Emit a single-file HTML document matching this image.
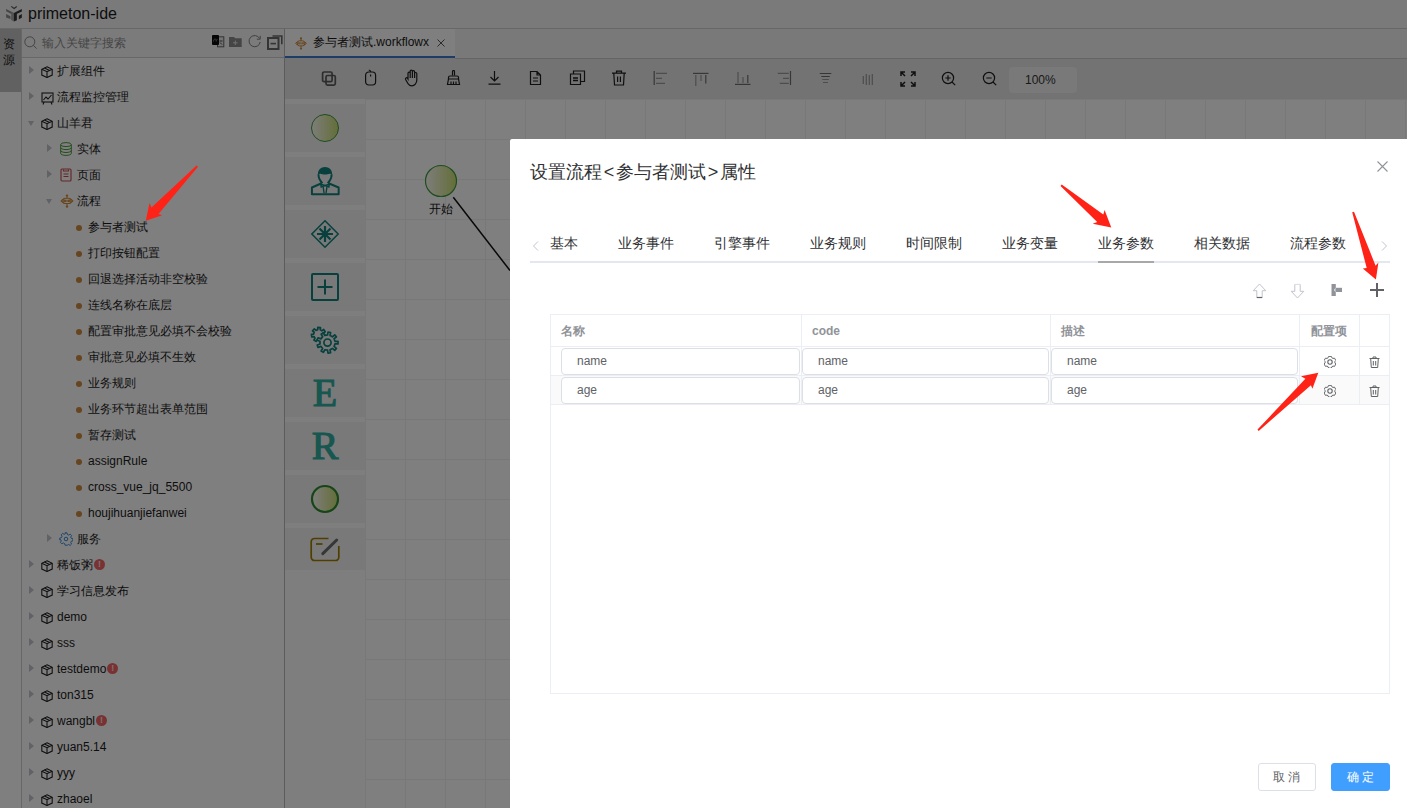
<!DOCTYPE html>
<html><head><meta charset="utf-8"><style>
*{box-sizing:border-box}
html,body{margin:0;padding:0}
body{width:1407px;height:808px;overflow:hidden;position:relative;background:#fff;font-family:"Liberation Sans",sans-serif;font-size:12px;color:#222}
.abs{position:absolute}
#hdr{position:absolute;left:0;top:0;width:1407px;height:29px;background:#f4f4f4;border-bottom:1px solid #cfcfcf}
#hdr .t{position:absolute;left:28px;top:4px;font-size:16px;color:#1a1a1a;line-height:19px}
#rail{position:absolute;left:0;top:29px;width:22px;height:779px;background:#fff;border-right:1px solid #cfcfcf}
#rail .tab{position:absolute;left:0;top:0;width:21px;height:63px;background:#c2c2c2;font-size:12px;line-height:16px;padding:6.5px 0 0 3px;color:#222}
#side{position:absolute;left:22px;top:29px;width:263px;height:779px;background:#fff;border-right:1px solid #b8b8b8}
#search{position:absolute;left:0;top:0;width:262px;height:29px;background:#f6f6f6;border-bottom:1px solid #cfcfcf}
#search .ph{position:absolute;left:20px;top:7px;color:#8c8c8c;font-size:12px;line-height:14px}
.row{position:absolute;left:0;width:263px;height:26px}
.row>*{position:absolute}
.tri{width:0;height:0;border-left:5px solid #c0c4cc;border-top:4px solid transparent;border-bottom:4px solid transparent;}
.trio{width:0;height:0;border-top:5px solid #c0c4cc;border-left:3.7px solid transparent;border-right:3.7px solid transparent;}
.dot{width:6px;height:6px;border-radius:50%;background:#cf8a3c;top:11px}
.ic{top:7.5px;line-height:0}
.tt{top:6px;line-height:14px;color:#1a1a1a;white-space:nowrap}
.badge{display:inline-block;width:11px;height:11px;border-radius:50%;background:#f26464;color:#fde;font-size:9px;line-height:11px;text-align:center;font-style:normal;font-weight:bold;vertical-align:2px;margin-left:1px}
#rowsbox{position:absolute;left:0;top:0}
#tabs{position:absolute;left:285px;top:29px;width:1122px;height:29px;background:#f3f3f3}
#tab1{position:absolute;left:0;top:0;width:170px;height:29px;background:#fff;border-bottom:2px solid #3a7bd0}
#tb{position:absolute;left:285px;top:58px;width:1122px;height:41px;background:#e6e6e6}
.tbi{position:absolute;top:14px}
#zoom{position:absolute;left:724px;top:9px;width:68px;height:26px;background:#f2f2f2;border-radius:4px;padding-left:16px;line-height:26px;color:#333;font-size:12px}
#canvas{position:absolute;left:285px;top:99px;width:1122px;height:709px;background-color:#fff;
 background-image:linear-gradient(#f0f0f0 1px,transparent 1px),linear-gradient(90deg,#f0f0f0 1px,transparent 1px);background-size:40px 40px;background-position:0 0,0 0}
#pal{position:absolute;left:285px;top:99px;width:80px;height:709px;background:#fcfcfc}
.pitem{position:absolute;left:285px;width:80px;height:48px;background:#f3f3f3}
#mask{position:absolute;left:0;top:0;width:1407px;height:808px;background:rgba(0,0,0,.5)}
#modal{position:absolute;left:510px;top:139px;width:920px;height:700px;background:#fff;border-radius:2px}

.mt{position:absolute;top:94px;font-size:14px;line-height:20px;color:#303133;white-space:nowrap}
.tbl{position:absolute;left:40px;top:175px;width:840px;height:380px;border:1px solid #ebeef5}
.tbl .th{position:absolute;top:9px;font-size:12px;font-weight:bold;color:#909399;line-height:14px;white-space:nowrap}
.vl{position:absolute;top:0;width:1px;background:#ebeef5}
.hl{position:absolute;left:0;width:838px;height:1px;background:#ebeef5}
.trw{position:absolute;left:41px;width:838px;height:28px}
.inp{position:absolute;height:27px;border:1px solid #dcdfe6;border-radius:4px;background:#fff}
.inp span{position:absolute;top:5px;line-height:14px;font-size:12px;color:#606266}
.br{display:inline-block;width:14px;text-align:center}
.btn{position:absolute;height:28px;border-radius:3px;font-size:12px;line-height:26px;text-align:center;white-space:nowrap}
</style></head><body>
<div id="hdr"><svg class="abs" style="left:4px;top:4px" width="20" height="20" viewBox="0 0 808 808"><path d="M290 95 410 180 515 100" fill="none" stroke="#555" stroke-width="45"/><path d="M85 200 400 365 400 455 85 290Z M85 400 260 490 260 610 85 545Z" fill="#8c8c8c"/><path d="M290 330 400 380 400 710 290 650Z" fill="#a8a8a8"/><path d="M400 365 720 200 720 300 400 455Z M400 380 520 330 520 660 400 710Z M600 470 720 405 720 560 600 615Z" fill="#383838"/></svg><span class="t">primeton-ide</span></div>
<div id="rail"><div class="tab">资<br>源</div></div>
<div id="side">
 <div id="search"><svg class="abs" style="left:2px;top:7px" width="13" height="13" viewBox="0 0 13 13"><circle cx="5.8" cy="5.8" r="5" fill="none" stroke="#8a8a8a" stroke-width="1"/><path d="M9.3 9.3l3.3 3.3" stroke="#8a8a8a" stroke-width="1"/></svg><span class="ph">输入关键字搜索</span>
 <svg class="abs" style="left:190px;top:6px" width="13" height="13" viewBox="0 0 13 13"><rect x="5.5" y="1.8" width="6.3" height="10" fill="#e8e8e8" stroke="#666" stroke-width="1"/><path d="M7.5 6h3M8 7.5l2 2" stroke="#444" stroke-width="1"/><rect x="0" y="0" width="7" height="10" rx="1" fill="#0a0a0a"/><path d="M1.5 6.5c0-2 1-2.5 1.7-2.5s1 .8 1 1.5v1M4.2 5.5c.3-.8.8-1.2 1.3-1.2" fill="none" stroke="#888" stroke-width=".8"/></svg>
 <svg class="abs" style="left:207px;top:8px" width="13" height="11" viewBox="0 0 13 11"><path d="M0 0h5l1.2 1.3H12.7V10H0z" fill="#8a8a8a"/><path d="M6.3 3.5v4.5M4 5.8h4.6" stroke="#e0e0e0" stroke-width="1"/></svg>
 <svg class="abs" style="left:226px;top:6px" width="14" height="13" viewBox="0 0 14 13"><path d="M11.6 3.5A5.6 5.6 0 1 0 12.2 7" fill="none" stroke="#808080" stroke-width="1"/><path d="M12.2 .8v3.4H8.8" fill="none" stroke="#808080" stroke-width="1"/></svg>
 <svg class="abs" style="left:245px;top:6px" width="16" height="15" viewBox="0 0 16 15"><path d="M5.5 1h9.3v8.3" fill="none" stroke="#6a6a6a" stroke-width="1.6"/><rect x="1" y="3" width="10.5" height="11" fill="none" stroke="#6a6a6a" stroke-width="2"/><path d="M3.5 8.6h5.5" stroke="#6a6a6a" stroke-width="1.6"/></svg>
 </div>
 <div id="rowsbox" style="top:-29px;left:-22px">
<div class="row" style="top:58px"><i class="tri" style="left:29px;top:8px"></i><span class="ic" style="left:41px;top:7.5px"><svg width="12" height="12.3" viewBox="0 0 12 13" preserveAspectRatio="none"><path d="M6 .8 11.2 3.4v6.2L6 12.2.8 9.6V3.4Z" fill="none" stroke="#222" stroke-width="1.1"/><path d="M.8 3.4 6 6l5.2-2.6M6 6v6.2M3.4 2.1l5.2 2.6" fill="none" stroke="#222" stroke-width="1.1"/></svg></span><span class="tt" style="left:57px">扩展组件</span></div>
<div class="row" style="top:84px"><i class="tri" style="left:29px;top:8px"></i><span class="ic" style="left:41px;top:7.5px"><svg width="13" height="13" viewBox="0 0 13 13"><rect x="1" y="1" width="11" height="9" fill="none" stroke="#222" stroke-width="1.1"/><path d="M2.5 8 5 5l2 2 3.5-4M3 10l-1 2.5M10 10l1 2.5" fill="none" stroke="#222" stroke-width="1.1"/></svg></span><span class="tt" style="left:57px">流程监控管理</span></div>
<div class="row" style="top:110px"><i class="trio" style="left:28px;top:11px"></i><span class="ic" style="left:41px;top:7.5px"><svg width="12" height="12.3" viewBox="0 0 12 13" preserveAspectRatio="none"><path d="M6 .8 11.2 3.4v6.2L6 12.2.8 9.6V3.4Z" fill="none" stroke="#222" stroke-width="1.1"/><path d="M.8 3.4 6 6l5.2-2.6M6 6v6.2M3.4 2.1l5.2 2.6" fill="none" stroke="#222" stroke-width="1.1"/></svg></span><span class="tt" style="left:57px">山羊君</span></div>
<div class="row" style="top:136px"><i class="tri" style="left:47px;top:8px"></i><span class="ic" style="left:60px;top:5.5px"><svg width="12" height="14" viewBox="0 0 12 14"><ellipse cx="6" cy="2.6" rx="5.3" ry="2" fill="none" stroke="#4a9a3a" stroke-width="1"/><path d="M.7 2.6v8.8c0 1.1 2.4 2 5.3 2s5.3-.9 5.3-2V2.6M.7 5.6c0 1.1 2.4 2 5.3 2s5.3-.9 5.3-2M.7 8.5c0 1.1 2.4 2 5.3 2s5.3-.9 5.3-2" fill="none" stroke="#4a9a3a" stroke-width="1"/></svg></span><span class="tt" style="left:77px">实体</span></div>
<div class="row" style="top:162px"><i class="tri" style="left:47px;top:8px"></i><span class="ic" style="left:60px;top:5.5px"><svg width="12" height="14" viewBox="0 0 12 14"><rect x="1" y="1" width="10" height="12" rx="1" fill="none" stroke="#c94a4a" stroke-width="1.1"/><path d="M3.5 1.5v1.5h5V1.5M3.5 6h5M3.5 8.5h5" fill="none" stroke="#c94a4a" stroke-width="1.1"/></svg></span><span class="tt" style="left:77px">页面</span></div>
<div class="row" style="top:188px"><i class="trio" style="left:46px;top:11px"></i><span class="ic" style="left:60px;top:5.5px"><svg width="14" height="14" viewBox="-.5 -.3 13 13"><g fill="none" stroke="#d08a3a" stroke-width="1"><rect x="2.3" y="3.6" width="7.4" height="5" rx="2"/><path d="M2.3 4.6 .6 6.1l1.7 1.5M9.7 4.6l1.7 1.5-1.7 1.5M6 2v1.6M6 8.6v1.8M6 5v2.2"/><circle cx="4" cy="6.1" r=".8"/><circle cx="8" cy="6.1" r=".8"/></g><circle cx="6" cy="1.2" r="1.1" fill="#d08a3a"/><circle cx="6" cy="11.3" r="1.1" fill="#d08a3a"/></svg></span><span class="tt" style="left:77px">流程</span></div>
<div class="row" style="top:214px"><i class="dot" style="left:76px"></i><span class="tt" style="left:88px">参与者测试</span></div>
<div class="row" style="top:240px"><i class="dot" style="left:76px"></i><span class="tt" style="left:88px">打印按钮配置</span></div>
<div class="row" style="top:266px"><i class="dot" style="left:76px"></i><span class="tt" style="left:88px">回退选择活动非空校验</span></div>
<div class="row" style="top:292px"><i class="dot" style="left:76px"></i><span class="tt" style="left:88px">连线名称在底层</span></div>
<div class="row" style="top:318px"><i class="dot" style="left:76px"></i><span class="tt" style="left:88px">配置审批意见必填不会校验</span></div>
<div class="row" style="top:344px"><i class="dot" style="left:76px"></i><span class="tt" style="left:88px">审批意见必填不生效</span></div>
<div class="row" style="top:370px"><i class="dot" style="left:76px"></i><span class="tt" style="left:88px">业务规则</span></div>
<div class="row" style="top:396px"><i class="dot" style="left:76px"></i><span class="tt" style="left:88px">业务环节超出表单范围</span></div>
<div class="row" style="top:422px"><i class="dot" style="left:76px"></i><span class="tt" style="left:88px">暂存测试</span></div>
<div class="row" style="top:448px"><i class="dot" style="left:76px"></i><span class="tt" style="left:88px">assignRule</span></div>
<div class="row" style="top:474px"><i class="dot" style="left:76px"></i><span class="tt" style="left:88px">cross_vue_jq_5500</span></div>
<div class="row" style="top:500px"><i class="dot" style="left:76px"></i><span class="tt" style="left:88px">houjihuanjiefanwei</span></div>
<div class="row" style="top:526px"><i class="tri" style="left:47px;top:8px"></i><span class="ic" style="left:59px;top:5.5px"><svg width="14" height="14" viewBox="0 0 14 14"><path d="M6 .8h2l.4 1.7 1.3.6 1.5-.9 1.4 1.4-.9 1.5.6 1.3 1.7.4v2l-1.7.4-.6 1.3.9 1.5-1.4 1.4-1.5-.9-1.3.6L8 13.2H6l-.4-1.7-1.3-.6-1.5.9-1.4-1.4.9-1.5-.6-1.3L.8 8V6l1.7-.4.6-1.3-.9-1.5 1.4-1.4 1.5.9 1.3-.6Z" fill="none" stroke="#3a8ad8" stroke-width="1"/><circle cx="7" cy="7" r="1.8" fill="none" stroke="#3a8ad8" stroke-width="1"/></svg></span><span class="tt" style="left:77px">服务</span></div>
<div class="row" style="top:552px"><i class="tri" style="left:29px;top:8px"></i><span class="ic" style="left:41px;top:7.5px"><svg width="12" height="12.3" viewBox="0 0 12 13" preserveAspectRatio="none"><path d="M6 .8 11.2 3.4v6.2L6 12.2.8 9.6V3.4Z" fill="none" stroke="#222" stroke-width="1.1"/><path d="M.8 3.4 6 6l5.2-2.6M6 6v6.2M3.4 2.1l5.2 2.6" fill="none" stroke="#222" stroke-width="1.1"/></svg></span><span class="tt" style="left:57px">稀饭粥<i class="badge">!</i></span></div>
<div class="row" style="top:578px"><i class="tri" style="left:29px;top:8px"></i><span class="ic" style="left:41px;top:7.5px"><svg width="12" height="12.3" viewBox="0 0 12 13" preserveAspectRatio="none"><path d="M6 .8 11.2 3.4v6.2L6 12.2.8 9.6V3.4Z" fill="none" stroke="#222" stroke-width="1.1"/><path d="M.8 3.4 6 6l5.2-2.6M6 6v6.2M3.4 2.1l5.2 2.6" fill="none" stroke="#222" stroke-width="1.1"/></svg></span><span class="tt" style="left:57px">学习信息发布</span></div>
<div class="row" style="top:604px"><i class="tri" style="left:29px;top:8px"></i><span class="ic" style="left:41px;top:7.5px"><svg width="12" height="12.3" viewBox="0 0 12 13" preserveAspectRatio="none"><path d="M6 .8 11.2 3.4v6.2L6 12.2.8 9.6V3.4Z" fill="none" stroke="#222" stroke-width="1.1"/><path d="M.8 3.4 6 6l5.2-2.6M6 6v6.2M3.4 2.1l5.2 2.6" fill="none" stroke="#222" stroke-width="1.1"/></svg></span><span class="tt" style="left:57px">demo</span></div>
<div class="row" style="top:630px"><i class="tri" style="left:29px;top:8px"></i><span class="ic" style="left:41px;top:7.5px"><svg width="12" height="12.3" viewBox="0 0 12 13" preserveAspectRatio="none"><path d="M6 .8 11.2 3.4v6.2L6 12.2.8 9.6V3.4Z" fill="none" stroke="#222" stroke-width="1.1"/><path d="M.8 3.4 6 6l5.2-2.6M6 6v6.2M3.4 2.1l5.2 2.6" fill="none" stroke="#222" stroke-width="1.1"/></svg></span><span class="tt" style="left:57px">sss</span></div>
<div class="row" style="top:656px"><i class="tri" style="left:29px;top:8px"></i><span class="ic" style="left:41px;top:7.5px"><svg width="12" height="12.3" viewBox="0 0 12 13" preserveAspectRatio="none"><path d="M6 .8 11.2 3.4v6.2L6 12.2.8 9.6V3.4Z" fill="none" stroke="#222" stroke-width="1.1"/><path d="M.8 3.4 6 6l5.2-2.6M6 6v6.2M3.4 2.1l5.2 2.6" fill="none" stroke="#222" stroke-width="1.1"/></svg></span><span class="tt" style="left:57px">testdemo<i class="badge">!</i></span></div>
<div class="row" style="top:682px"><i class="tri" style="left:29px;top:8px"></i><span class="ic" style="left:41px;top:7.5px"><svg width="12" height="12.3" viewBox="0 0 12 13" preserveAspectRatio="none"><path d="M6 .8 11.2 3.4v6.2L6 12.2.8 9.6V3.4Z" fill="none" stroke="#222" stroke-width="1.1"/><path d="M.8 3.4 6 6l5.2-2.6M6 6v6.2M3.4 2.1l5.2 2.6" fill="none" stroke="#222" stroke-width="1.1"/></svg></span><span class="tt" style="left:57px">ton315</span></div>
<div class="row" style="top:708px"><i class="tri" style="left:29px;top:8px"></i><span class="ic" style="left:41px;top:7.5px"><svg width="12" height="12.3" viewBox="0 0 12 13" preserveAspectRatio="none"><path d="M6 .8 11.2 3.4v6.2L6 12.2.8 9.6V3.4Z" fill="none" stroke="#222" stroke-width="1.1"/><path d="M.8 3.4 6 6l5.2-2.6M6 6v6.2M3.4 2.1l5.2 2.6" fill="none" stroke="#222" stroke-width="1.1"/></svg></span><span class="tt" style="left:57px">wangbl<i class="badge">!</i></span></div>
<div class="row" style="top:734px"><i class="tri" style="left:29px;top:8px"></i><span class="ic" style="left:41px;top:7.5px"><svg width="12" height="12.3" viewBox="0 0 12 13" preserveAspectRatio="none"><path d="M6 .8 11.2 3.4v6.2L6 12.2.8 9.6V3.4Z" fill="none" stroke="#222" stroke-width="1.1"/><path d="M.8 3.4 6 6l5.2-2.6M6 6v6.2M3.4 2.1l5.2 2.6" fill="none" stroke="#222" stroke-width="1.1"/></svg></span><span class="tt" style="left:57px">yuan5.14</span></div>
<div class="row" style="top:760px"><i class="tri" style="left:29px;top:8px"></i><span class="ic" style="left:41px;top:7.5px"><svg width="12" height="12.3" viewBox="0 0 12 13" preserveAspectRatio="none"><path d="M6 .8 11.2 3.4v6.2L6 12.2.8 9.6V3.4Z" fill="none" stroke="#222" stroke-width="1.1"/><path d="M.8 3.4 6 6l5.2-2.6M6 6v6.2M3.4 2.1l5.2 2.6" fill="none" stroke="#222" stroke-width="1.1"/></svg></span><span class="tt" style="left:57px">yyy</span></div>
<div class="row" style="top:786px"><i class="tri" style="left:29px;top:8px"></i><span class="ic" style="left:41px;top:7.5px"><svg width="12" height="12.3" viewBox="0 0 12 13" preserveAspectRatio="none"><path d="M6 .8 11.2 3.4v6.2L6 12.2.8 9.6V3.4Z" fill="none" stroke="#222" stroke-width="1.1"/><path d="M.8 3.4 6 6l5.2-2.6M6 6v6.2M3.4 2.1l5.2 2.6" fill="none" stroke="#222" stroke-width="1.1"/></svg></span><span class="tt" style="left:57px">zhaoel</span></div>
 </div>
</div>
<div id="tabs"><div id="tab1"><svg class="abs" style="left:10px;top:8px" width="12" height="13" viewBox="0 0 12 12.5"><g fill="none" stroke="#d08a3a" stroke-width="1"><rect x="2.3" y="3.6" width="7.4" height="5" rx="2"/><path d="M2.3 4.6 .6 6.1l1.7 1.5M9.7 4.6l1.7 1.5-1.7 1.5M6 2v1.6M6 8.6v1.8M6 5v2.2"/><circle cx="4" cy="6.1" r=".8"/><circle cx="8" cy="6.1" r=".8"/></g><circle cx="6" cy="1.2" r="1.1" fill="#d08a3a"/><circle cx="6" cy="11.3" r="1.1" fill="#d08a3a"/></svg><span class="abs" style="left:28px;top:6px;line-height:14px;color:#1a1a1a">参与者测试.workflowx</span><svg class="abs" style="left:152px;top:10px" width="8" height="8" viewBox="0 0 8 8"><path d="M.5.5l7 7M7.5.5l-7 7" stroke="#555" stroke-width="1"/></svg></div></div>
<div id="tb"><svg class="abs" style="left:36px;top:12px" width="16" height="17" viewBox="0 0 16 17"><rect x="1.6" y="2" width="9.5" height="9.7" rx="1.5" fill="none" stroke="#5a5a5a" stroke-width="1.7"/><rect x="5" y="5.5" width="9.3" height="9.6" rx="1.5" fill="none" stroke="#5a5a5a" stroke-width="1.7"/></svg><svg class="abs" style="left:79px;top:11px" width="14" height="17" viewBox="0 0 14 17"><rect x="1.6" y="3" width="10" height="13" rx="3.2" fill="none" stroke="#1e1e1e" stroke-width="1.2"/><path d="M6.6 3C6.6 1.7 6 1.1 4.8 1" fill="none" stroke="#1e1e1e" stroke-width="1.2"/><path d="M6.6 5.5v2" fill="none" stroke="#1e1e1e" stroke-width="1.2"/></svg><svg class="abs" style="left:119px;top:11px" width="16" height="18" viewBox="0 0 16 18"><path d="M4 10V4.2a1.1 1.1 0 0 1 2.2 0V9V2.2a1.1 1.1 0 0 1 2.2 0V9V2.8a1.1 1.1 0 0 1 2.2 0V9V4.6a1.1 1.1 0 0 1 2.2 0v6.4c0 3.3-2.2 5.8-5 5.8c-2 0-3-1-4-2.5L1.6 10.5a1.2 1.2 0 0 1 1.9-1.4L4 10z" fill="none" stroke="#1e1e1e" stroke-width="1.2"/></svg><svg class="abs" style="left:161px;top:12px" width="15" height="16" viewBox="0 0 15 16"><path d="M6.5 5.5V1.5a1 1 0 0 1 2 0v4" fill="none" stroke="#1e1e1e" stroke-width="1.2"/><path d="M2.5 7.5a1.5 1.5 0 0 1 1.5-1.5h7a1.5 1.5 0 0 1 1.5 1.5V9h-10z" fill="none" stroke="#1e1e1e" stroke-width="1.2"/><path d="M2.5 9 1.5 14.5h12l-1-5.5M5 11.5v3M7.5 11.5v3M10 11.5v3" fill="none" stroke="#1e1e1e" stroke-width="1.2"/></svg><svg class="abs" style="left:202px;top:12px" width="15" height="16" viewBox="0 0 15 16"><path d="M7.5 1v10M3.5 7l4 4 4-4M1.5 14.2h12" fill="none" stroke="#1e1e1e" stroke-width="1.2"/></svg><svg class="abs" style="left:243px;top:12px" width="15" height="16" viewBox="0 0 15 16"><path d="M2.5 1.5h6.5l3.5 3.5v9.5h-10z M9 1.5V5h3.5 M5 8h5M5 11h5" fill="none" stroke="#1e1e1e" stroke-width="1.2"/></svg><svg class="abs" style="left:284px;top:11px" width="17" height="17" viewBox="0 0 17 17"><path d="M1.5 5h10v10.5h-10z M4.5 5V2h11v10.5h-4" fill="none" stroke="#1e1e1e" stroke-width="1.2"/><path d="M4 9h5M4 11.5h5" stroke="#1e1e1e" stroke-width="1.6"/></svg><svg class="abs" style="left:326px;top:12px" width="16" height="16" viewBox="0 0 16 16"><path d="M1 3.2h14M5.5 3V1.2h5V3M2.8 3.2l.7 11.8h9l.7-11.8M6.6 6.5v5.5M9.4 6.5v5.5" fill="none" stroke="#1e1e1e" stroke-width="1.2"/></svg><svg class="abs" style="left:367px;top:12px" width="16" height="16" viewBox="0 0 16 16"><path d="M2.2 1v14" stroke="#6e6e6e" stroke-width="1.2"/><path d="M4 3.4h11M4 8.3h6M4 13.3h9" stroke="#9a9a9a" stroke-width="1.2"/></svg><svg class="abs" style="left:407px;top:12px" width="18" height="17" viewBox="0 0 18 17"><path d="M1 3.4h15.5" stroke="#6e6e6e" stroke-width="1.2"/><path d="M3.8 5v11" stroke="#9a9a9a" stroke-width="1.2"/><path d="M9 5v6" stroke="#9a9a9a" stroke-width="1.2"/><path d="M13.8 5v8.5" stroke="#6e6e6e" stroke-width="1.2"/></svg><svg class="abs" style="left:449px;top:12px" width="18" height="16" viewBox="0 0 18 16"><path d="M1 14.4h15.5" stroke="#6e6e6e" stroke-width="1.2"/><path d="M4 2v11" stroke="#9a9a9a" stroke-width="1.2"/><path d="M9 7v6" stroke="#9a9a9a" stroke-width="1.2"/><path d="M13.8 5v8" stroke="#6e6e6e" stroke-width="1.2"/></svg><svg class="abs" style="left:491px;top:12px" width="16" height="16" viewBox="0 0 16 16"><path d="M14.5 1v14" stroke="#6e6e6e" stroke-width="1.2"/><path d="M1.8 3.4h11M7 8.3h6M3.8 13.3h9" stroke="#9a9a9a" stroke-width="1.2"/></svg><svg class="abs" style="left:533px;top:12px" width="16" height="16" viewBox="0 0 16 16"><path d="M1.8 3.5h11.5M3.3 6.5h8.5" stroke="#6e6e6e" stroke-width="1.2"/><path d="M4.3 9.5h6.5M5 12.5h5" stroke="#9a9a9a" stroke-width="1.2"/></svg><svg class="abs" style="left:575px;top:12px" width="16" height="16" viewBox="0 0 16 16"><path d="M3.3 6v8M6.3 4v11M9.3 5v10M12.3 4v11" stroke="#9a9a9a" stroke-width="1.2"/></svg><svg class="abs" style="left:614px;top:12px" width="18" height="18" viewBox="0 0 18 18"><path d="M2 6V2h4M2 2l4 4M12 2h4v4M16 2l-4 4M2 12v4h4M2 16l4-4M16 12v4h-4M16 16l-4-4" fill="none" stroke="#1e1e1e" stroke-width="1.5"/></svg><svg class="abs" style="left:656px;top:13px" width="17" height="16" viewBox="0 0 17 16"><circle cx="7" cy="7" r="5.6" fill="none" stroke="#1e1e1e" stroke-width="1.2"/><path d="M11 11l3.2 3.2M4.3 7h5.4M7 4.3v5.4" fill="none" stroke="#1e1e1e" stroke-width="1.2"/></svg><svg class="abs" style="left:697px;top:13px" width="17" height="16" viewBox="0 0 17 16"><circle cx="7" cy="7" r="5.6" fill="none" stroke="#1e1e1e" stroke-width="1.2"/><path d="M11 11l3.2 3.2M4.3 7h5.4" fill="none" stroke="#1e1e1e" stroke-width="1.2"/></svg><div id="zoom">100%</div></div>
<div class="abs" style="left:455px;top:58px;width:952px;height:1px;background:#cacaca"></div>
<div id="canvas"></div>
<div id="pal"></div>
<div class="pitem" style="top:104px;height:48px"></div><div class="pitem" style="top:157px;height:48px"></div><div class="pitem" style="top:210px;height:48px"></div><div class="pitem" style="top:263px;height:48px"></div><div class="pitem" style="top:316px;height:48px"></div><div class="pitem" style="top:369px;height:48px"></div><div class="pitem" style="top:422px;height:48px"></div><div class="pitem" style="top:475px;height:48px"></div><div class="pitem" style="top:528px;height:42px"></div>

<svg class="abs" style="left:310px;top:113px" width="30" height="30" viewBox="0 0 30 30"><defs><linearGradient id="g1" x1="0" x2="1"><stop offset="0" stop-color="#fbfcf6"/><stop offset="1" stop-color="#c8dc70"/></linearGradient></defs><circle cx="15" cy="15" r="13.5" fill="url(#g1)" stroke="#3c9a3c" stroke-width="1"/></svg>
<svg class="abs" style="left:305px;top:160px" width="40" height="40" viewBox="0 0 808 808"><path d="M262 300C255 195 320 140 405 140S555 195 548 300C505 255 465 295 405 295S305 255 262 300Z" fill="#0f807a"/><path d="M272 290C272 370 305 425 352 470M538 290C538 370 505 425 458 470" fill="none" stroke="#0f807a" stroke-width="40"/><path d="M335 470 140 555V690H680V555L475 470" fill="none" stroke="#0f807a" stroke-width="40" stroke-linejoin="round"/><path d="M405 515 318 488 328 548ZM405 515 492 488 482 548Z" fill="none" stroke="#0f807a" stroke-width="28"/><path d="M368 548 385 672M442 548 425 672" fill="none" stroke="#0f807a" stroke-width="28"/></svg>
<svg class="abs" style="left:310px;top:219px" width="30" height="30" viewBox="0 0 30 30"><path d="M15 1.8 28.2 15 15 28.2 1.8 15z" fill="none" stroke="#0f807a" stroke-width="1.5"/><path d="M15 7v16M7 15h16M9.5 9.5l11 11M20.5 9.5l-11 11" stroke="#0f807a" stroke-width="2.2"/></svg>
<svg class="abs" style="left:311px;top:273px" width="28" height="28" viewBox="0 0 28 28"><rect x="1" y="1" width="26" height="26" rx="1" fill="none" stroke="#0f807a" stroke-width="2"/><path d="M14 6.5v15M6.5 14h15" stroke="#0f807a" stroke-width="2"/></svg>
<svg class="abs" style="left:300px;top:316px" width="50" height="50" viewBox="0 0 50 50"><g fill="none" stroke="#0f807a" stroke-width="1.7" stroke-linejoin="round"><path d="M23.60 18.81 25.76 19.39 24.95 21.99 22.84 21.25 21.55 22.64 22.45 24.69 19.91 25.68 19.17 23.57 17.28 23.42 16.24 25.40 13.88 24.04 15.07 22.15 14.01 20.58 11.81 21.00 11.41 18.30 13.63 18.05 14.19 16.24 12.49 14.79 14.35 12.79 15.93 14.37 17.69 13.68 17.77 11.45 20.50 11.65 20.24 13.88 21.88 14.82 23.68 13.49 25.21 15.75 23.31 16.93Z"/><path d="M34.99 25.32 38.02 25.28 38.02 27.92 34.99 27.88 34.06 30.44 36.40 32.35 34.71 34.37 32.42 32.39 30.06 33.76 30.62 36.73 28.03 37.19 27.55 34.20 24.86 33.73 23.38 36.37 21.10 35.05 22.65 32.45 20.90 30.36 18.07 31.44 17.17 28.96 20.02 27.96 20.02 25.24 17.17 24.24 18.07 21.76 20.90 22.84 22.65 20.75 21.10 18.15 23.38 16.83 24.86 19.47 27.55 19.00 28.03 16.01 30.62 16.47 30.06 19.44 32.42 20.81 34.71 18.83 36.40 20.85 34.06 22.76Z" fill="#f3f3f3"/><circle cx="27.5" cy="26.6" r="3.6"/></g></svg>
<div class="abs" style="left:300px;top:371px;width:50px;text-align:center;font-family:'Liberation Serif',serif;font-weight:normal;-webkit-text-stroke:1.1px #2fae9e;font-size:40px;line-height:44px;color:#2fae9e">E</div>
<div class="abs" style="left:300px;top:424px;width:50px;text-align:center;font-family:'Liberation Serif',serif;font-weight:normal;-webkit-text-stroke:1.1px #2fae9e;font-size:40px;line-height:44px;color:#2fae9e">R</div>
<svg class="abs" style="left:310px;top:484px" width="30" height="30" viewBox="0 0 30 30"><defs><linearGradient id="g2" x1="0" x2="1"><stop offset="0" stop-color="#fbfcf6"/><stop offset="1" stop-color="#c8dc70"/></linearGradient></defs><circle cx="15" cy="15" r="13" fill="url(#g2)" stroke="#2e8a2e" stroke-width="2.2"/></svg>
<svg class="abs" style="left:310px;top:537px" width="30" height="25" viewBox="0 0 30 25"><path d="M18.5 1.5H4.5A3.3 3.3 0 0 0 1.2 4.8v15.4a3.3 3.3 0 0 0 3.3 3.3h21a3.3 3.3 0 0 0 3.3-3.3V9" fill="none" stroke="#a07c00" stroke-width="1.7"/><path d="M6 7h6.5" stroke="#a07c00" stroke-width="1.7"/><path d="M12.8 16.6 26.7 3" stroke="#6e6e6e" stroke-width="3" stroke-linecap="round"/></svg>


<svg class="abs" style="left:424px;top:164px" width="34" height="34" viewBox="0 0 34 34"><defs><linearGradient id="g3" x1="0" x2="1"><stop offset="0" stop-color="#fbfcf6"/><stop offset="1" stop-color="#c8dc70"/></linearGradient></defs><circle cx="17" cy="17" r="15.5" fill="url(#g3)" stroke="#3c9a3c" stroke-width="1.2"/></svg>
<div class="abs" style="left:411px;top:202px;width:60px;text-align:center;line-height:14px;color:#111">开始</div>
<svg class="abs" style="left:450px;top:194px" width="62" height="80" viewBox="0 0 62 80"><path d="M3.3 3.3 60 76.5" stroke="#111" stroke-width="1.5"/></svg>

<div id="mask"></div>

<div id="modal">
 <div class="abs" style="left:20px;top:21px;font-size:18px;line-height:24px;color:#303133;white-space:nowrap">设置流程<span class="br">&lt;</span>参与者测试<span class="br">&gt;</span>属性</div>
 <svg class="abs" style="left:867px;top:22px" width="11" height="11" viewBox="0 0 11 11"><path d="M.5.5l10 10M10.5.5l-10 10" stroke="#909399" stroke-width="1.1"/></svg>
 <svg class="abs" style="left:22px;top:102px" width="7" height="10" viewBox="0 0 7 10"><path d="M6 .5 1.5 5 6 9.5" fill="none" stroke="#c0c4cc" stroke-width="1"/></svg>
 <svg class="abs" style="left:871px;top:102px" width="7" height="10" viewBox="0 0 7 10"><path d="M1 .5 5.5 5 1 9.5" fill="none" stroke="#c0c4cc" stroke-width="1"/></svg>
 <span class="mt" style="left:40px">基本</span><span class="mt" style="left:108px">业务事件</span><span class="mt" style="left:204px">引擎事件</span><span class="mt" style="left:300px">业务规则</span><span class="mt" style="left:396px">时间限制</span><span class="mt" style="left:492px">业务变量</span><span class="mt" style="left:588px">业务参数</span><span class="mt" style="left:684px">相关数据</span><span class="mt" style="left:780px">流程参数</span>
 <div class="abs" style="left:20px;top:122px;width:860px;height:2px;background:#e4e7ed"></div>
 <div class="abs" style="left:588px;top:122px;width:56px;height:2px;background:#a8a8a8"></div>
 <svg class="abs" style="left:742px;top:144px" width="15" height="16" viewBox="0 0 15 16"><path d="M7.5 1 1.2 7.7h3.6v6.8h5.4V7.7h3.6z" fill="none" stroke="#c0c4cc" stroke-width="1"/><path d="M4.8 14.5h5.4" stroke="#606266" stroke-width="1.2"/></svg>
 <svg class="abs" style="left:780px;top:144px" width="15" height="16" viewBox="0 0 15 16"><path d="M7.5 15 1.2 8.3h3.6V1.5h5.4v6.8h3.6z" fill="none" stroke="#c0c4cc" stroke-width="1"/><path d="M4.8 1.3h5.4" stroke="#e4e7ed" stroke-width="1"/></svg>
 <svg class="abs" style="left:821px;top:145px" width="12" height="12" viewBox="0 0 12 12"><path d="M.5 0h4.3v12H.5z" fill="#909399"/><path d="M4.8 3.8h6.2v4.2H4.8z" fill="#909399"/><path d="M4.3 4.6c-.8.4-.8 2.4 0 2.8" fill="none" stroke="#fff" stroke-width=".9"/></svg>
 <svg class="abs" style="left:859px;top:143px" width="16" height="16" viewBox="0 0 16 16"><path d="M8 1v14M1 8h14" stroke="#606266" stroke-width="2"/></svg>
 <div class="trw" style="top:208px;background:#fff"></div><div class="inp" style="left:51px;top:209px;width:238.5px"><span style="left:15px">name</span></div><div class="inp" style="left:292px;top:209px;width:246.5px"><span style="left:15px">name</span></div><div class="inp" style="left:541px;top:209px;width:246.5px"><span style="left:15px">name</span></div><span class="abs" style="left:813.5px;top:217px;line-height:0"><svg width="12" height="12" viewBox="0 0 12 12"><path d="M4.6 .9h2.8l.5 1.4 1.2.7 1.5-.3 1.4 2.4-1 1.1v1.4l1 1.1-1.4 2.4-1.5-.3-1.2.7-.5 1.4H4.6l-.5-1.4-1.2-.7-1.5.3L0 8.7l1-1.1V6.2L0 5.1l1.4-2.4 1.5.3 1.2-.7z" transform="translate(.1 -.5) scale(.98)" fill="none" stroke="#606266" stroke-width="1"/><circle cx="6" cy="6" r="2.2" fill="none" stroke="#606266" stroke-width="1.1"/></svg></span><span class="abs" style="left:859px;top:216.5px;line-height:0"><svg width="11" height="12" viewBox="0 0 11 12"><path d="M.5 2.5h10M4 2.5V1h3v1.5M1.7 2.5l.6 9h6.4l.6-9M4.3 5v4.5M6.7 5v4.5" fill="none" stroke="#606266" stroke-width="1"/></svg></span><div class="trw" style="top:237px;background:#fafafa"></div><div class="inp" style="left:51px;top:238px;width:238.5px"><span style="left:15px">age</span></div><div class="inp" style="left:292px;top:238px;width:246.5px"><span style="left:15px">age</span></div><div class="inp" style="left:541px;top:238px;width:246.5px"><span style="left:15px">age</span></div><span class="abs" style="left:813.5px;top:246px;line-height:0"><svg width="12" height="12" viewBox="0 0 12 12"><path d="M4.6 .9h2.8l.5 1.4 1.2.7 1.5-.3 1.4 2.4-1 1.1v1.4l1 1.1-1.4 2.4-1.5-.3-1.2.7-.5 1.4H4.6l-.5-1.4-1.2-.7-1.5.3L0 8.7l1-1.1V6.2L0 5.1l1.4-2.4 1.5.3 1.2-.7z" transform="translate(.1 -.5) scale(.98)" fill="none" stroke="#606266" stroke-width="1"/><circle cx="6" cy="6" r="2.2" fill="none" stroke="#606266" stroke-width="1.1"/></svg></span><span class="abs" style="left:859px;top:245.5px;line-height:0"><svg width="11" height="12" viewBox="0 0 11 12"><path d="M.5 2.5h10M4 2.5V1h3v1.5M1.7 2.5l.6 9h6.4l.6-9M4.3 5v4.5M6.7 5v4.5" fill="none" stroke="#606266" stroke-width="1"/></svg></span>
 
<div class="tbl">
 <div class="th" style="left:10px">名称</div>
 <div class="th" style="left:261px">code</div>
 <div class="th" style="left:510px">描述</div>
 <div class="th" style="left:748px;width:60px;text-align:center">配置项</div>
 <div class="vl" style="left:250px;height:90px"></div>
 <div class="vl" style="left:499px;height:90px"></div>
 <div class="vl" style="left:748px;height:90px"></div>
 <div class="vl" style="left:808px;height:90px"></div>
 <div class="hl" style="top:31px"></div>
 <div class="hl" style="top:60px"></div>
 <div class="hl" style="top:89px"></div>
</div>

 <div class="btn" style="left:747.5px;top:624px;width:58px;background:#fff;border:1px solid #dcdfe6;color:#606266">取 消</div>
 <div class="btn" style="left:821px;top:624px;width:59px;background:#409eff;border:1px solid #409eff;color:#fff">确 定</div>
</div>

<svg class="abs" style="left:0;top:0" width="1407" height="808" viewBox="0 0 1407 808"><g fill="#ff2317">
<path d="M198.0 166.7 158.5 214.0 162.2 215.2 145.8 220.8 149.5 203.0 151.5 207.5 196.6 165.5Z"/>
<path d="M1061.7 184.6 1103.3 214.4 1104.6 209.9 1111.3 227.4 1092.7 223.7 1097.2 222.0 1060.5 186.0Z"/>
<path d="M1354.0 211.7 1375.6 265.7 1378.4 262.4 1375.9 279.6 1362.8 268.5 1366.7 268.0 1352.2 212.3Z"/>
<path d="M1258.7 431.0 1310.9 385.2 1312.4 388.7 1318.3 372.7 1301.0 376.3 1305.4 378.8 1257.5 429.6Z"/>
</g></svg>
</body></html>
